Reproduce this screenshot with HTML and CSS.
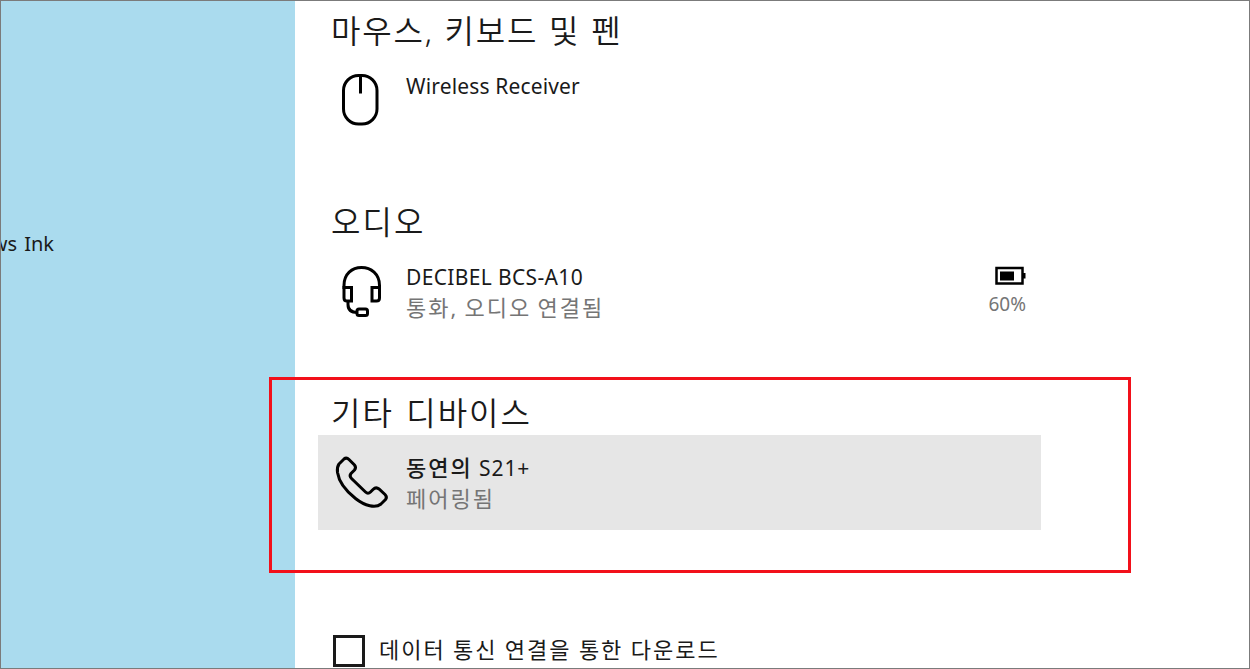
FILE: index.html
```
<!DOCTYPE html>
<html lang="ko">
<head>
    <meta charset="UTF-8">
    <meta name="viewport" content="width=device-width, initial-scale=1.0">
    <title>Bluetooth 및 기타 디바이스</title>
    <link rel="stylesheet" href="styles.css">
</head>
<body>
    <div class="window">
        <nav class="sidebar">
            <a class="menu-item">ws Ink</a>
        </nav>

        <main class="content">
            <section class="group">
                <h2 class="long">마우스, 키보드 및 펜</h2>
                <div class="device">
                    <svg class="icon" viewBox="0 0 60 60" width="60" height="60">
                        <rect x="13.500" y="4.500" width="33.500" height="48.500" rx="15" />
                        <path d="M30.500 4.500V22.500" />
                    </svg>
                    <div class="info">
                        <p class="name">Wireless Receiver</p>
                    </div>
                </div>
            </section>

            <section class="group">
                <h2>오디오</h2>
                <div class="device">
                    <svg class="icon" viewBox="0 0 60 60" width="60" height="60">
                        <path d="M14 27V23.500C14 12 22 5.500 31.500 5.500S49.500 12 49.500 23.500V27" />
                        <path d="M14 25.500h7.500v13.500H17q-3 0-3-3zM49.500 25.500h-7.500v13.500H46.500q3 0 3-3z" />
                        <path d="M18 39v3.500q0 8 9.500 8" />
                        <rect x="27" y="47" width="10.500" height="6.500" rx="2" />
                    </svg>
                    <div class="info">
                        <p class="name headset">DECIBEL BCS-A10</p>
                        <p class="status">통화, 오디오 연결됨</p>
                    </div>
                    <div class="battery">
                        <svg viewBox="0 0 32 20" width="32" height="20">
                            <rect class="case" x="2.500" y="2" width="26" height="15.500" />
                            <rect x="6" y="5.500" width="14" height="9" />
                            <rect x="29" y="7" width="2.500" height="5.500" />
                        </svg>
                        <p class="percent">60%</p>
                    </div>
                </div>
            </section>

            <section class="group">
                <h2>기타 디바이스</h2>
                <div class="device selected">
                    <svg class="icon" viewBox="0 0 60 60" width="60" height="60">
                        <path d="M9 11L14 6Q16.500 4 19 6.500L24.500 12Q26.500 14.500 24.500 17L21 20.500Q19 23 21.500 25.500L35.500 39Q38 41.500 40.500 39L43 36.500Q46 33.500 49 36L55 41.500Q57.500 44 55.500 46.500L51 51C45.500 55.500 35 53 25.500 45.500C16 38 9 29.500 7.500 19.500Q6.800 14 9 11z" />
                    </svg>
                    <div class="info">
                        <p class="name phone"><b>동연의</b> S21+</p>
                        <p class="status">페어링됨</p>
                    </div>
                </div>
            </section>

            <label class="option">
                <span class="checkbox"></span>
                <span class="option-text">데이터 통신 연결을 통한 다운로드</span>
            </label>
        </main>

        <div class="highlight"></div>
    </div>
</body>
</html>
```

FILE: styles.css
```
* {
    box-sizing: border-box;
}
body {
    margin: 0;
    font-family: "Noto Sans", "Noto Sans CJK KR", sans-serif;
    color: #1a1a1a;
}
h2, p {
    margin: 0;
    font-weight: normal;
    white-space: nowrap;
}
.window {
    position: relative;
    display: flex;
    width: 1250px;
    height: 669px;
    border: 1px solid #7b7b7b;
    background-color: white;
    overflow: hidden;
}
.sidebar {
    display: flex;
    justify-content: flex-end;
    flex: none;
    width: 294px;
    padding: 227px 241px 0 0;
    background-color: #aadbee;
    overflow: hidden;
}
.menu-item {
    font-size: 20px;
    line-height: 32px;
    word-spacing: 2px;
    white-space: nowrap;
}
.content {
    padding: 8px 0 0 23px;
}
.group {
    height: 191px;
}
h2 {
    height: 44px;
    padding-left: 13px;
    font-size: 32px;
    font-weight: 350;
    line-height: 44px;
    letter-spacing: 2px;
    word-spacing: 2px;
}
.long {
    letter-spacing: 1.8px;
    word-spacing: 0.7px;
}
.device {
    display: flex;
    width: 723px;
    height: 95px;
    padding: 18px 15px 0 12px;
}
.selected {
    background-color: #e6e6e6;
}
.icon {
    flex: none;
    margin-right: 16px;
    fill: none;
    stroke: black;
    stroke-width: 3;
}
.info {
    flex: 1;
}
.name {
    height: 31px;
    font-size: 21px;
    line-height: 31px;
    letter-spacing: 0.15px;
}
.headset {
    letter-spacing: 0.35px;
}
.phone {
    line-height: 29px;
    letter-spacing: 0.9px;
}
.phone b {
    font-size: 22px;
    font-weight: 500;
    letter-spacing: 2px;
}
.status {
    font-size: 22px;
    line-height: 28px;
    letter-spacing: 2px;
    word-spacing: -1.5px;
    color: #757575;
}
.battery {
    display: flex;
    flex-direction: column;
    align-items: flex-end;
    padding-top: 4px;
}
.case {
    fill: none;
    stroke: black;
    stroke-width: 2.5;
}
.percent {
    margin-top: 5px;
    font-size: 19px;
    color: #757575;
}
.option {
    display: flex;
    height: 32px;
    margin-top: 53px;
    padding-left: 15px;
}
.checkbox {
    width: 32px;
    height: 32px;
    margin-right: 14px;
    border: 3px solid #1a1a1a;
}
.option-text {
    font-size: 22px;
    line-height: 29px;
    letter-spacing: 2px;
    word-spacing: -0.4px;
    white-space: nowrap;
}
.highlight {
    position: absolute;
    left: 268px;
    top: 376px;
    width: 862px;
    height: 196px;
    border: 3px solid #f2101a;
}
```
